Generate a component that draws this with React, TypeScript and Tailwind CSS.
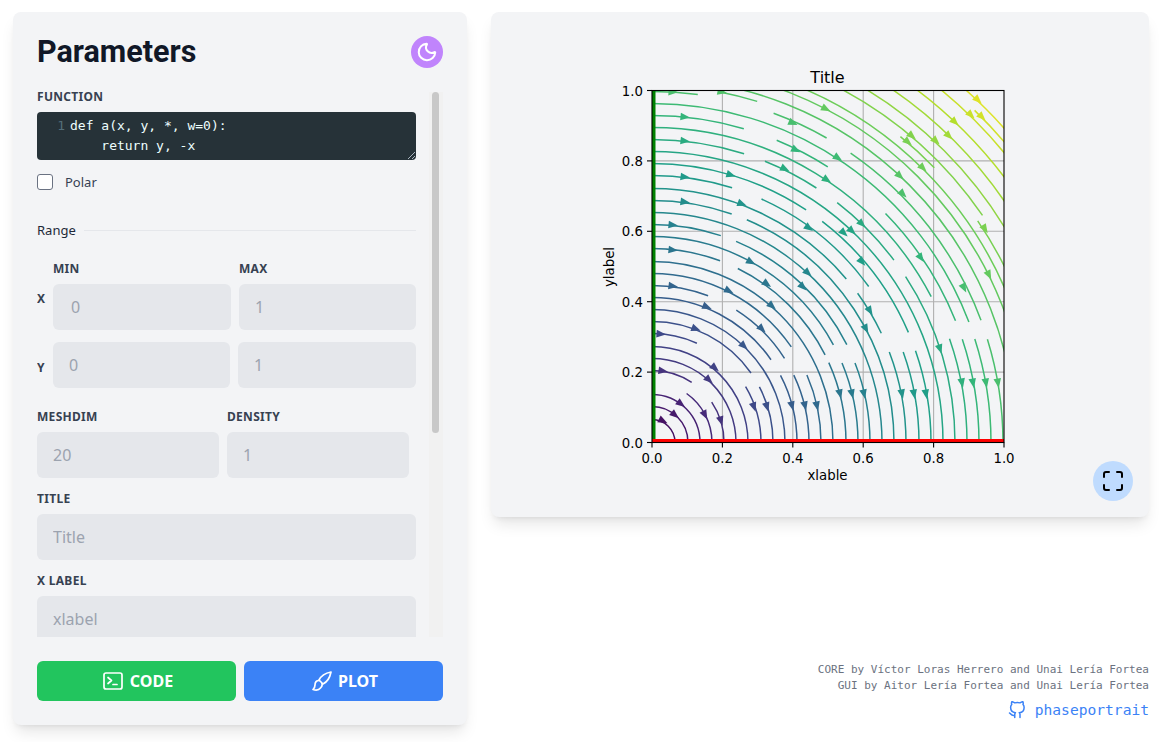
import React from 'react';
import { Maximize, Moon } from 'lucide-react';
import { FiGithub } from 'react-icons/fi';

const OX = 652;
const OY = 442.5;
const SIZE = 352;
const TOP = OY - SIZE;

const VIRIDIS = [
  [68, 1, 84], [72, 40, 120], [62, 74, 137], [49, 104, 142], [38, 130, 142],
  [31, 158, 137], [53, 183, 121], [109, 205, 89], [180, 222, 44], [253, 231, 37],
];

function viridis(t: number) {
  const p = Math.min(0.999, Math.max(0, t)) * (VIRIDIS.length - 1);
  const i = Math.floor(p);
  const f = p - i;
  const c = VIRIDIS[i].map((v, k) => Math.round(v + (VIRIDIS[i + 1][k] - v) * f));
  return `rgb(${c[0]},${c[1]},${c[2]})`;
}

type Pt = [number, number] | null;

// radius in px, then [start, end] pairs in page px. null = left edge / bottom edge
const STREAMS: [number, [Pt, Pt][]][] = [
  [23, [[null, null]]],
  [36, [[null, null]]],
  [48, [[null, null]]],
  [60, [[[687, 393], null]]],
  [72, [[null, [692, 382]], [[712, 402], null]]],
  [84, [[null, null]]],
  [96, [[null, null]]],
  [109, [[null, [697, 343]], [[745, 387], null]]],
  [121, [[null, [751, 373]], [[759, 387], null]]],
  [133, [[null, null]]],
  [145, [[null, [772, 359]], [[781, 375], null]]],
  [157, [[null, [708, 296]], [[737, 309], [785, 358]], [[794, 375], null]]],
  [169, [[null, [797, 343]], [[807, 375], null]]],
  [181, [[null, null]]],
  [194, [[null, [720, 261]], [[738, 268], [825, 355]], [[828, 363], null]]],
  [206, [[null, [833, 345]], [[842, 363], null]]],
  [218, [[null, [721, 235]], [[735, 244], [846, 345]], [[855, 363], null]]],
  [230, [[null, null]]],
  [242, [[null, [732, 213]], [[745, 224], null]]],
  [254, [[null, [845, 280]], [[858, 293], [882, 333]], [[889, 352], null]]],
  [267, [[null, [732, 188]], [[761, 200], [868, 287]], [[903, 352], null]]],
  [279, [[null, [806, 210]], [[821, 223], [907, 333]], [[915, 351], null]]],
  [291, [[null, null]]],
  [303, [[null, [744, 154]], [[765, 161], [817, 187]], [[837, 203], [894, 260]], [[905, 277], null]]],
  [315, [[null, [925, 300]], [[949, 339], null]]],
  [327, [[null, [744, 128]], [[776, 142], [827, 168]], [[885, 214], [955, 321]], [[963, 339], null]]],
  [339, [[null, [969, 322]], [[975, 339], null]]],
  [351, [[null, [698, 93]], [[773, 115], [826, 139]], [[852, 151], [979, 321]], [[988, 339], null]]],
  [357, [[[720, 92], [757, 102]]]],
  [364, [[null, null]]],
  [376, [[null, null]]],
  [385, [[null, null]]],
  [394, [[[901, 136], [935, 167]], [[979, 220], null]]],
  [401, [[null, [983, 215]]]],
  [413, [[null, null]]],
  [427, [[null, null]]],
  [441, [[null, null]]],
  [456, [[null, null]]],
  [463, [[[975, 110], null]]],
  [472, [[null, null]]],
];

const ARROWS: [number, number][] = [
  [673, 92], [722, 92], [685, 117], [685, 141], [685, 177], [731, 175], [742, 204], [685, 202], [673, 225], [673, 250],
  [751, 262], [793, 123], [796, 150], [785, 169], [809, 228], [826, 109], [838, 158], [827, 180], [862, 224], [852, 231],
  [844, 233], [862, 262], [903, 194], [900, 176], [923, 168], [908, 142], [912, 136], [936, 141], [949, 136], [955, 122],
  [971, 115], [982, 117], [978, 100], [985, 229], [921, 258], [673, 286], [729, 291], [707, 307], [696, 329], [661, 334],
  [772, 306], [767, 284], [803, 287], [808, 273], [762, 329], [744, 346], [715, 368], [709, 380], [663, 371], [681, 404],
  [705, 415], [675, 415], [663, 421], [721, 421], [754, 407], [767, 407], [792, 406], [805, 406], [817, 406], [840, 394],
  [852, 394], [864, 394], [902, 394], [914, 394], [926, 394], [940, 349], [962, 383], [973, 383], [986, 383], [998, 383],
  [870, 311], [866, 329], [964, 288], [989, 275],
];

function arcPath(r: number, a: Pt, b: Pt) {
  const t1 = a ? Math.atan2(OY - a[1], a[0] - OX) : Math.PI / 2;
  const t2 = b ? Math.atan2(OY - b[1], b[0] - OX) : 0;
  const x1 = OX + r * Math.cos(t1);
  const y1 = OY - r * Math.sin(t1);
  const x2 = OX + r * Math.cos(t2);
  const y2 = OY - r * Math.sin(t2);
  return `M${x1.toFixed(1)} ${y1.toFixed(1)}A${r} ${r} 0 0 1 ${x2.toFixed(1)} ${y2.toFixed(1)}`;
}

const TICKS = [0, 0.2, 0.4, 0.6, 0.8, 1];

function PhasePlot() {
  return (
    <svg viewBox="600 60 420 430" className="h-[430px] w-[420px]">
      <defs>
        <clipPath id="axes">
          <rect x={OX} y={TOP} width={SIZE} height={SIZE} />
        </clipPath>
      </defs>
      <text x={827.5} y={83} textAnchor="middle" fontSize={16} fontFamily="'DejaVu Sans', sans-serif" fill="#000">Title</text>
      {TICKS.slice(1, 5).map((t) => (
        <g key={t} stroke="#b0b0b0" strokeWidth={1.1}>
          <line x1={OX + t * SIZE} x2={OX + t * SIZE} y1={TOP} y2={OY} />
          <line x1={OX} x2={OX + SIZE} y1={OY - t * SIZE} y2={OY - t * SIZE} />
        </g>
      ))}
      <g clipPath="url(#axes)" fill="none" strokeWidth={1.5}>
        {STREAMS.map(([r, segs]) =>
          segs.map(([a, b], i) => (
            <path key={`${r}-${i}`} d={arcPath(r, a, b)} stroke={viridis(r / 496)} />
          )),
        )}
      </g>
      <g clipPath="url(#axes)">
        {ARROWS.map(([x, y]) => {
          const dx = x - OX;
          const dy = OY - y;
          const angle = (Math.atan2(dx, dy) * 180) / Math.PI;
          return (
            <polygon
              key={`${x}-${y}`}
              points="5,0 -4.5,-3.8 -4.5,3.8"
              fill={viridis(Math.hypot(dx, dy) / 496)}
              transform={`translate(${x} ${y}) rotate(${angle})`}
            />
          );
        })}
        <rect x={OX} y={TOP} width={3.5} height={SIZE} fill="#008000" />
        <rect x={OX} y={OY - 3.5} width={SIZE} height={3.5} fill="#ff0000" />
      </g>
      <rect x={OX} y={TOP} width={SIZE} height={SIZE} fill="none" stroke="#000" strokeWidth={1.1} />
      {TICKS.map((t) => (
        <g key={t} fontSize={13.3} fontFamily="'DejaVu Sans', sans-serif" fill="#000">
          <line x1={OX + t * SIZE} x2={OX + t * SIZE} y1={OY} y2={OY + 5} stroke="#000" strokeWidth={1.1} />
          <line x1={OX - 5} x2={OX} y1={OY - t * SIZE} y2={OY - t * SIZE} stroke="#000" strokeWidth={1.1} />
          <text x={OX + t * SIZE} y={462.5} textAnchor="middle">{t.toFixed(1)}</text>
          <text x={643} y={OY - t * SIZE + 5} textAnchor="end">{t.toFixed(1)}</text>
        </g>
      ))}
      <text x={827.5} y={480} textAnchor="middle" fontSize={13.3} fontFamily="'DejaVu Sans', sans-serif" fill="#000">xlable</text>
      <text transform="translate(614 267) rotate(-90)" textAnchor="middle" fontSize={13.3} fontFamily="'DejaVu Sans', sans-serif" fill="#000">ylabel</text>
    </svg>
  );
}

function TerminalIcon() {
  return (
    <svg viewBox="0 0 20 18" className="h-[18px] w-5" fill="none" stroke="currentColor" strokeWidth="1.7" strokeLinecap="round" strokeLinejoin="round">
      <rect x="1" y="1" width="18" height="16" rx="2" />
      <path d="M5 5.500L8.500 8.500L5 11.500M10 12.500H14" />
    </svg>
  );
}

function BrushIcon() {
  return (
    <svg viewBox="0 0 20 20" className="h-5 w-5" fill="none" stroke="currentColor" strokeWidth="1.7" strokeLinecap="round" strokeLinejoin="round">
      <path d="M19 1C14 2 9 5 7 9L11 13C15 11 18 6 19 1Z" />
      <path d="M7 9.500C4.500 9.500 3 11.500 3 14C3 16 2 17.500 1 18.500C4 19.500 7 19 8.500 17C10 15.500 10.500 14 10 12.500" />
    </svg>
  );
}

function FieldLabel({ children, className = '' }: { children: React.ReactNode; className?: string }) {
  return <label className={`block text-xs font-bold uppercase tracking-wide text-[#374151] ${className}`}>{children}</label>;
}

function Field({ placeholder, className = '' }: { placeholder: string; className?: string }) {
  return (
    <input
      placeholder={placeholder}
      className={`block h-[46px] rounded-md bg-[#e5e7eb] px-4 text-base text-gray-700 placeholder:text-[#9ca3af] ${className}`}
    />
  );
}

export default function App() {
  return (
    <div className="flex h-[742px] w-[1165px] items-start gap-6 overflow-hidden bg-white pl-[13px] pt-3 font-['Noto_Sans',sans-serif]">
      <aside className="flex h-[713px] w-[454px] shrink-0 flex-col rounded-lg bg-[#f3f4f6] p-6 shadow-lg">
        <header className="flex h-[32px] items-center justify-between">
          <h1 className="font-['Roboto',sans-serif] text-[30.5px] font-bold leading-8 text-[#111827]">Parameters</h1>
          <button className="flex h-8 w-8 items-center justify-center rounded-full bg-[#c084fc] text-white">
            <Moon size={22} strokeWidth={2.2} />
          </button>
        </header>
        <div className="mt-5 flex h-[549px] overflow-hidden">
          <div className="w-[379px] shrink-0 pt-1">
            <FieldLabel className="h-5 leading-[10px]">Function</FieldLabel>
            <div className="relative h-12 rounded bg-[#263238] font-['DejaVu_Sans_Mono',monospace] text-[13px] leading-5 text-[#eeffff]">
              <div className="flex pt-[4px]">
                <span className="w-[33px] shrink-0 pr-[5px] text-right text-[#546e7a]">1</span>
                <pre className="font-['DejaVu_Sans_Mono',monospace]">{'def a(x, y, *, w=0):\n    return y, -x'}</pre>
              </div>
              <svg viewBox="0 0 8 8" className="absolute bottom-[1px] right-[1px] h-2 w-2" stroke="#cbd5e1" strokeWidth="0.8">
                <path d="M1 8L8 1M5 8L8 5" />
              </svg>
            </div>
            <div className="mt-[14px] flex h-4 items-center gap-3">
              <input type="checkbox" className="h-4 w-4 appearance-none rounded-[3px] border border-gray-500 bg-white" />
              <span className="pt-px text-[13px] text-gray-700">Polar</span>
            </div>
            <div className="mt-[33px] flex h-4 items-center gap-2">
              <span className="text-[13px] text-gray-800">Range</span>
              <div className="-mt-px h-px flex-1 bg-gray-200" />
            </div>
            <div className="mt-[22px] flex gap-2 pl-4">
              <FieldLabel className="w-[178px] leading-4">Min</FieldLabel>
              <FieldLabel className="leading-4">Max</FieldLabel>
            </div>
            <div className="mt-[7px] flex items-start">
              <FieldLabel className="w-4 pt-[7px]">X</FieldLabel>
              <div className="flex gap-2">
                <Field placeholder="0" className="w-[178px] pl-[18px]" />
                <Field placeholder="1" className="w-[177px]" />
              </div>
            </div>
            <div className="mt-3 flex items-start">
              <FieldLabel className="w-4 pt-[18px]">Y</FieldLabel>
              <div className="flex gap-2">
                <Field placeholder="0" className="w-[177px]" />
                <Field placeholder="1" className="w-[178px]" />
              </div>
            </div>
            <div className="mt-[21px] flex gap-2">
              <div className="w-[182px]">
                <FieldLabel className="mb-[7px] leading-4">Meshdim</FieldLabel>
                <Field placeholder="20" className="w-full" />
              </div>
              <div className="w-[182px]">
                <FieldLabel className="mb-[7px] leading-4">Density</FieldLabel>
                <Field placeholder="1" className="w-full" />
              </div>
            </div>
            <FieldLabel className="mb-[7px] mt-[13px] leading-4">Title</FieldLabel>
            <Field placeholder="Title" className="w-full" />
            <FieldLabel className="mb-[7px] mt-[13px] leading-4">X Label</FieldLabel>
            <Field placeholder="xlabel" className="w-full" />
          </div>
          <div className="ml-[13px] mt-1 w-[14px] shrink-0 bg-[#f1f1f1] pl-[3px]">
            <div className="h-[341px] w-[7px] rounded-sm bg-[#c8c8c8]" />
          </div>
        </div>
        <div className="mt-6 flex gap-2">
          <button className="flex h-10 w-[199px] items-center justify-center gap-[7px] rounded-md bg-[#22c55e] pl-[3px] text-base font-bold text-white">
            <TerminalIcon />
            CODE
          </button>
          <button className="flex h-10 w-[199px] items-center justify-center gap-[6px] rounded-md bg-[#3b82f6] pl-[3px] text-base font-bold text-white">
            <BrushIcon />
            PLOT
          </button>
        </div>
      </aside>
      <main className="flex w-[658px] shrink-0 flex-col">
        <section className="relative h-[505px] rounded-lg bg-[#f3f4f6] pl-[109px] pt-[48px] shadow-lg">
          <PhasePlot />
          <button className="absolute bottom-4 right-4 flex h-10 w-10 items-center justify-center rounded-full bg-[#bfdbfe] text-black">
            <Maximize size={24} strokeWidth={2} />
          </button>
        </section>
        <footer className="mt-[145px] flex flex-col items-end font-['DejaVu_Sans_Mono',monospace] text-[11px] leading-4 text-[#6b7280]">
          <p>CORE by Víctor Loras Herrero and Unai Lería Fortea</p>
          <p>GUI by Aitor Lería Fortea and Unai Lería Fortea</p>
          <a href="#" className="mt-[7px] flex items-center gap-[9px] text-[14.6px] text-[#3b82f6]">
            <FiGithub className="h-[18px] w-[18px]" />
            phaseportrait
          </a>
        </footer>
      </main>
    </div>
  );
}
